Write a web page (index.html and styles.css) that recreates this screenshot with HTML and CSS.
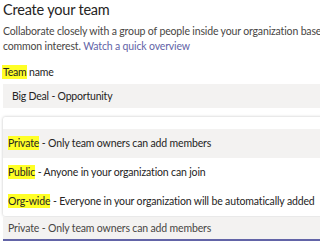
FILE: index.html
```html
<!DOCTYPE html>
<html lang="en">
<head>
  <meta charset="UTF-8" />
  <meta name="viewport" content="width=device-width, initial-scale=1.0" />
  <title>Create your team</title>
  <link rel="stylesheet" href="styles.css">
</head>
<body>
  <div class="page">
    <h1 class="title">Create your team</h1>
    <p class="intro">Collaborate closely with a group of people inside your organization based on<br>common interest. <a href="#" class="link">Watch a quick overview</a></p>

    <!-- Team name field -->
    <label class="field-label"><span class="hl hl-slant">Team</span> name</label>
    <div class="text-input">Big Deal - Opportunity</div>

    <!-- Privacy dropdown, open -->
    <ul class="menu">
      <li class="menu-item selected"><span class="hl">Private</span> - Only team owners can add members</li>
      <li class="menu-item"><span class="hl">Public</span> - Anyone in your organization can join</li>
      <li class="menu-item"><span class="hl">Org-wide</span> - Everyone in your organization will be automatically added</li>
    </ul>
    <div class="select">Private - Only team owners can add members</div>
  </div>
</body>
</html>
```

FILE: styles.css
```css
body {
  margin: 0;
  padding: 0;
  font-family: Lato, "Open Sans", sans-serif;
  color: #484644;
  background: #fff;
  overflow: hidden;
}
.page {
  width: 340px;
  padding-left: 3px;
}
.title {
  margin: 0;
  font-size: 14.5px;
  font-weight: 400;
  line-height: 19px;
  letter-spacing: -0.2px;
  color: #252423;
  white-space: nowrap;
}
.intro {
  margin: 5px 0 0;
  font-size: 10.5px;
  line-height: 15px;
  letter-spacing: -0.15px;
  white-space: nowrap;
}
.link {
  color: #6264a7;
  text-decoration: none;
}
.field-label {
  display: block;
  margin-top: 11px;
  font-size: 10.5px;
  line-height: 15px;
  letter-spacing: -0.2px;
  color: #252423;
}
.hl {
  background: #ffff26;
  padding: 1px 0;
}
.hl-slant {
  margin-left: -1px;
  padding-left: 1px;
}
.text-input {
  margin-top: 4px;
  height: 24px;
  padding-left: 9px;
  background: #f3f2f1;
  font-size: 10.5px;
  line-height: 24px;
  letter-spacing: -0.2px;
  color: #252423;
}
.menu {
  list-style: none;
  margin: 9px 0 0;
  padding: 12px 0 0;
  background: #fff;
  box-shadow: 0 0 3px rgba(0, 0, 0, 0.25);
  border-radius: 2px;
}
.menu-item {
  height: 29px;
  padding-left: 5px;
  font-size: 10.5px;
  line-height: 29px;
  letter-spacing: -0.15px;
  color: #252423;
  white-space: nowrap;
}
.menu-item.selected {
  background: #f3f2f1;
}
.select {
  margin-top: 1px;
  height: 22px;
  padding-left: 5px;
  background: #f3f2f1;
  border-bottom: 2px solid #6264a7;
  font-size: 10.5px;
  line-height: 23px;
  letter-spacing: -0.15px;
  color: #484644;
  white-space: nowrap;
}
```
